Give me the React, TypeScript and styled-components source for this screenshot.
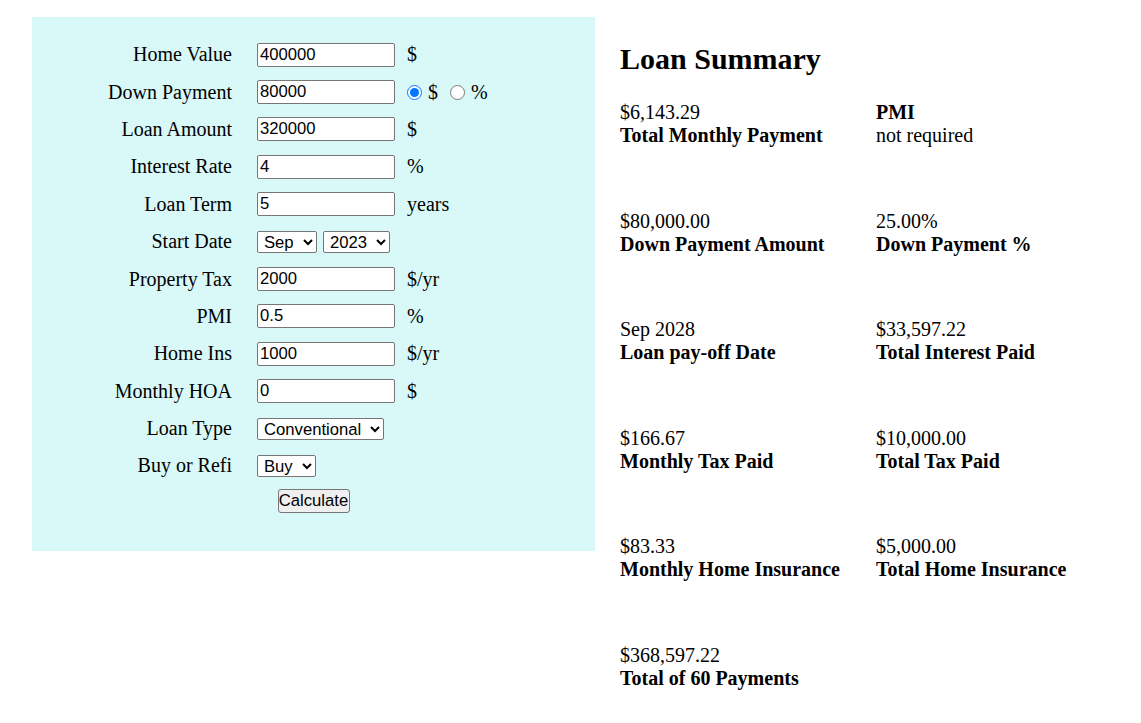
import styled, { createGlobalStyle } from "styled-components";

const GlobalStyle = createGlobalStyle`
  html, body {
    margin: 0;
    padding: 0;
    background: #fff;
    color: #000;
    font-family: "Liberation Serif", "Times New Roman", serif;
    font-size: 20px;
  }
`;

const Page = styled.div`
  display: flex;
  align-items: flex-start;
  padding: 17px 0 0 32px;
`;

const Panel = styled.form`
  width: 563px;
  box-sizing: border-box;
  background: #d9f8f8;
  padding: 19px 0 29px;
  display: grid;
  grid-template-columns: 200px auto;
  grid-auto-rows: 37.4px;
  column-gap: 25px;
  align-items: center;
`;

const Label = styled.label`
  text-align: right;
  white-space: nowrap;
`;

const Field = styled.div`
  display: flex;
  align-items: center;
  gap: 12px;
`;

const Controls = styled.div`
  display: flex;
  align-items: center;
  gap: 6px;
`;

const TextInput = styled.input`
  width: 138px;
  height: 24px;
  box-sizing: border-box;
  border: 1px solid #767676;
  border-radius: 2px;
  padding: 1px 2px;
  font-family: "Liberation Sans", Arial, sans-serif;
  font-size: 16.67px;
  color: #000;
  background: #fff;
`;

const Select = styled.select<{ $w: number }>`
  width: ${(p) => p.$w}px;
  height: 22px;
  box-sizing: border-box;
  border: 1px solid #767676;
  border-radius: 2px;
  padding: 0 2px;
  font-family: "Liberation Sans", Arial, sans-serif;
  font-size: 16.67px;
  color: #000;
  background: #fff;
`;

const Unit = styled.span`
  white-space: nowrap;
`;

const Radio = styled.input`
  width: 15px;
  height: 15px;
  margin: 0 6px 0 0;
  accent-color: #0075ff;
`;

const RadioOption = styled.label`
  display: flex;
  align-items: center;
  margin-right: 6px;
`;

const ButtonRow = styled.div`
  grid-column: 1 / -1;
  display: flex;
  justify-content: center;
  padding-bottom: 4px;
`;

const Button = styled.button`
  width: 72px;
  height: 24px;
  box-sizing: border-box;
  border: 1px solid #767676;
  border-radius: 3px;
  background: #efefef;
  padding: 0;
  font-family: "Liberation Sans", Arial, sans-serif;
  font-size: 16.67px;
  color: #000;
`;

const Summary = styled.section`
  margin-left: 25px;
`;

const Heading = styled.h2`
  font-size: 30px;
  font-weight: bold;
  margin: 25px 0 25px;
  line-height: 34px;
`;

const Grid = styled.div`
  display: grid;
  grid-template-columns: 256px 256px;
  row-gap: 62.5px;
`;

const Item = styled.div`
  line-height: 23px;
  white-space: nowrap;
`;

const Strong = styled.div`
  font-weight: bold;
`;

type Row = { label: string; value: string; unit?: string };

const summary: { value: string; label: string; labelFirst?: boolean }[] = [
  { value: "$6,143.29", label: "Total Monthly Payment" },
  { value: "not required", label: "PMI", labelFirst: true },
  { value: "$80,000.00", label: "Down Payment Amount" },
  { value: "25.00%", label: "Down Payment %" },
  { value: "Sep 2028", label: "Loan pay-off Date" },
  { value: "$33,597.22", label: "Total Interest Paid" },
  { value: "$166.67", label: "Monthly Tax Paid" },
  { value: "$10,000.00", label: "Total Tax Paid" },
  { value: "$83.33", label: "Monthly Home Insurance" },
  { value: "$5,000.00", label: "Total Home Insurance" },
  { value: "$368,597.22", label: "Total of 60 Payments" },
];

const lowerRows: Row[] = [
  { label: "Property Tax", value: "2000", unit: "$/yr" },
  { label: "PMI", value: "0.5", unit: "%" },
  { label: "Home Ins", value: "1000", unit: "$/yr" },
  { label: "Monthly HOA", value: "0", unit: "$" },
];

const InputRow = ({ label, value, unit }: Row) => (
  <>
    <Label>{label}</Label>
    <Field>
      <TextInput type="text" defaultValue={value} />
      {unit && <Unit>{unit}</Unit>}
    </Field>
  </>
);

const App = () => {
  return (
    <>
      <GlobalStyle />
      <Page>
        <Panel onSubmit={(e) => e.preventDefault()}>
          <InputRow label="Home Value" value="400000" unit="$" />
          <Label>Down Payment</Label>
          <Field>
            <TextInput type="text" defaultValue="80000" />
            <Controls>
              <RadioOption>
                <Radio type="radio" name="dp" defaultChecked />
                <Unit>$</Unit>
              </RadioOption>
              <RadioOption>
                <Radio type="radio" name="dp" />
                <Unit>%</Unit>
              </RadioOption>
            </Controls>
          </Field>
          <InputRow label="Loan Amount" value="320000" unit="$" />
          <InputRow label="Interest Rate" value="4" unit="%" />
          <InputRow label="Loan Term" value="5" unit="years" />
          <Label>Start Date</Label>
          <Controls>
            <Select $w={60} defaultValue="Sep">
              <option>Aug</option>
              <option>Sep</option>
              <option>Oct</option>
            </Select>
            <Select $w={67} defaultValue="2023">
              <option>2023</option>
              <option>2024</option>
            </Select>
          </Controls>
          {lowerRows.map((r) => (
            <InputRow key={r.label} {...r} />
          ))}
          <Label>Loan Type</Label>
          <Controls>
            <Select $w={127} defaultValue="Conventional">
              <option>Conventional</option>
              <option>FHA</option>
              <option>VA</option>
            </Select>
          </Controls>
          <Label>Buy or Refi</Label>
          <Controls>
            <Select $w={59} defaultValue="Buy">
              <option>Buy</option>
              <option>Refi</option>
            </Select>
          </Controls>
          <ButtonRow>
            <Button type="submit">Calculate</Button>
          </ButtonRow>
        </Panel>
        <Summary>
          <Heading>Loan Summary</Heading>
          <Grid>
            {summary.map((s) =>
              s.labelFirst ? (
                <Item key={s.label}>
                  <Strong>{s.label}</Strong>
                  <div>{s.value}</div>
                </Item>
              ) : (
                <Item key={s.label}>
                  <div>{s.value}</div>
                  <Strong>{s.label}</Strong>
                </Item>
              )
            )}
          </Grid>
        </Summary>
      </Page>
    </>
  );
};

export default App;
